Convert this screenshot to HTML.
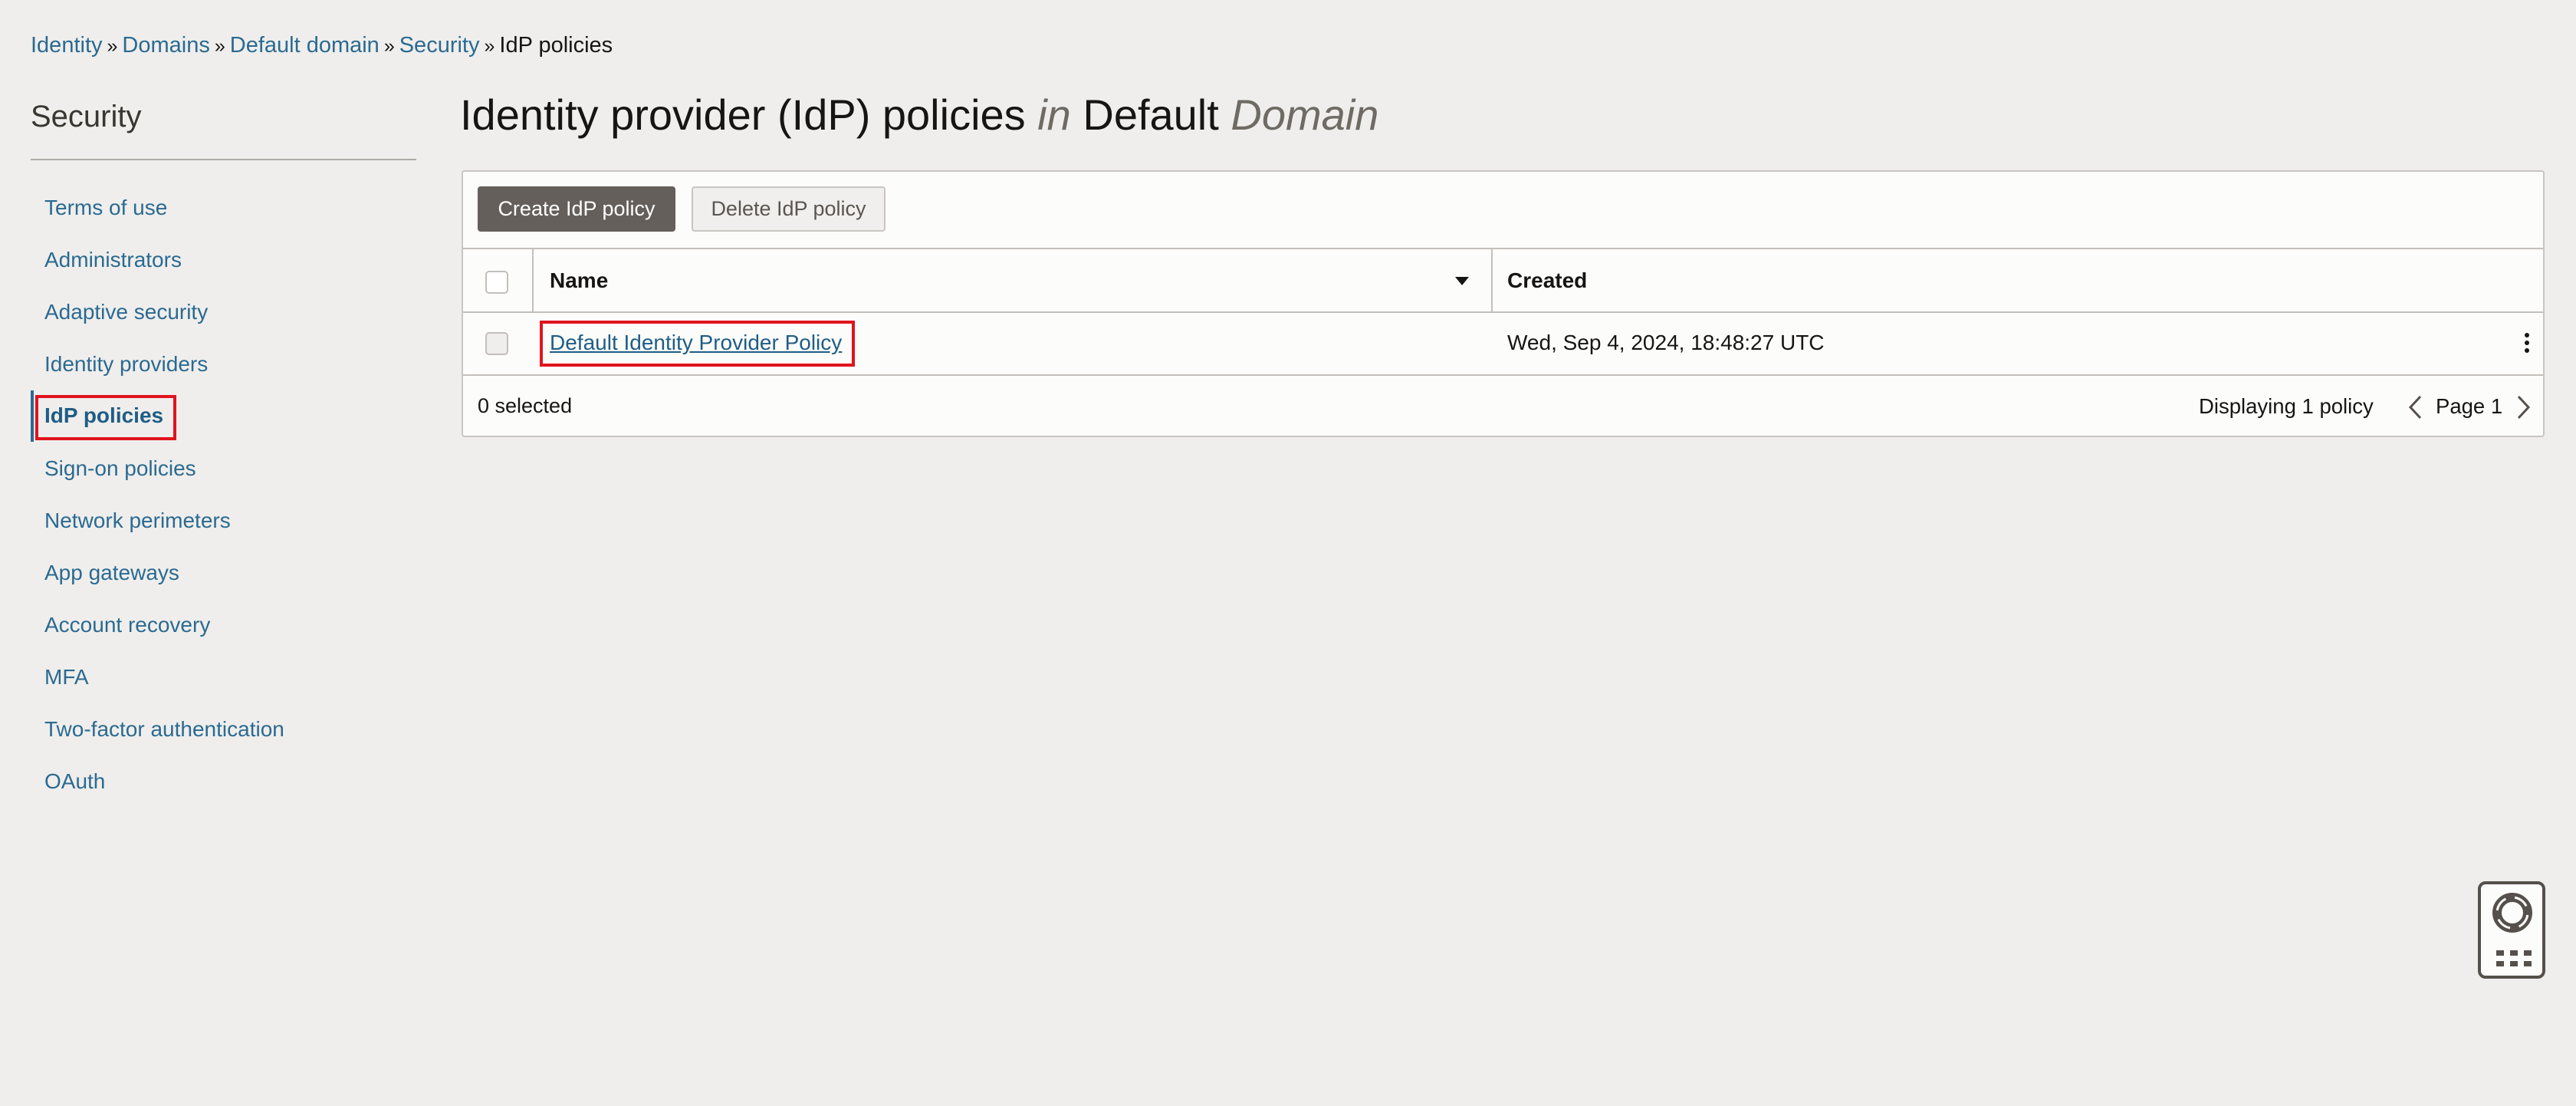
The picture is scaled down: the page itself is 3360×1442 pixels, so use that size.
<!DOCTYPE html>
<html><head><meta charset="utf-8">
<style>
*{box-sizing:border-box;margin:0;padding:0}
html,body{width:3360px;height:1442px;overflow:hidden}
body{background:#efeeec;font-family:"Liberation Sans",sans-serif;color:#161513;position:relative}
.a{position:absolute;white-space:nowrap}
.bc{top:43px;left:40px;font-size:29px;color:#2b6a91}
.bc span.s{color:#161513;font-size:25px;margin:0 6px}
.bc .cur{color:#161513}
.nav{left:58px;font-size:28px;color:#2b6a91}
.panel{left:602px;top:222px;width:2717px;height:348px;background:#fcfcfb;border:2px solid #c9c5c0;border-radius:4px}
.hl{position:absolute;left:0;right:0;height:2px;background:#c3bfba}
.cb{position:absolute;width:30px;height:30px;border:2px solid #c3bfba;border-radius:5px;background:#fff}
</style></head><body>
<div class="a bc">Identity<span class="s">»</span>Domains<span class="s">»</span>Default domain<span class="s">»</span>Security<span class="s">»</span><span class="cur">IdP policies</span></div>
<div class="a" style="left:40px;top:130px;font-size:40px;color:#3a3631;font-weight:300">Security</div>
<div class="a" style="left:40px;top:207px;width:503px;height:2px;background:#b0aca7"></div>
<div class="a nav" style="top:255px">Terms of use</div>
<div class="a nav" style="top:323px">Administrators</div>
<div class="a nav" style="top:391px">Adaptive security</div>
<div class="a nav" style="top:459px">Identity providers</div>
<div class="a" style="left:40px;top:509px;width:4px;height:67px;background:#2b6a91"></div>
<div class="a" style="left:46px;top:515px;width:184px;height:59px;border:4px solid #e0141e"></div>
<div class="a nav" style="top:526px;font-weight:bold;color:#1f5d85">IdP policies</div>
<div class="a nav" style="top:595px">Sign-on policies</div>
<div class="a nav" style="top:663px">Network perimeters</div>
<div class="a nav" style="top:731px">App gateways</div>
<div class="a nav" style="top:799px">Account recovery</div>
<div class="a nav" style="top:867px">MFA</div>
<div class="a nav" style="top:935px">Two-factor authentication</div>
<div class="a nav" style="top:1003px">OAuth</div>

<div class="a" style="left:600px;top:117px;font-size:56px;color:#161513">Identity provider (IdP) policies <i style="color:#6f6a64">in</i> Default <i style="color:#6f6a64">Domain</i></div>

<div class="a panel">
  <div style="position:absolute;left:19px;top:19px;width:258px;height:59px;background:#645f5a;border-radius:4px;color:#fff;font-size:27px;line-height:59px;text-align:center">Create IdP policy</div>
  <div style="position:absolute;left:298px;top:19px;width:253px;height:59px;background:#f1efed;border:2px solid #c9c5c0;border-radius:4px;color:#5a5550;font-size:27px;line-height:55px;text-align:center">Delete IdP policy</div>
  <div class="hl" style="top:99px"></div>
  <div class="hl" style="top:182px"></div>
  <div class="hl" style="top:264px"></div>
  <div style="position:absolute;left:90px;top:101px;width:2px;height:81px;background:#c3bfba"></div>
  <div style="position:absolute;left:1341px;top:101px;width:2px;height:81px;background:#c3bfba"></div>
  <div class="cb" style="left:29px;top:129px"></div>
  <div class="cb" style="left:29px;top:209px;background:#efeeec"></div>
  <div class="a" style="left:113px;top:126px;font-size:28px;font-weight:bold">Name</div>
  <div class="a" style="left:1294px;top:137px;width:0;height:0;border-left:9px solid transparent;border-right:9px solid transparent;border-top:11px solid #161513"></div>
  <div class="a" style="left:1362px;top:126px;font-size:28px;font-weight:bold">Created</div>
  <div class="a" style="left:100px;top:194px;width:411px;height:60px;border:4px solid #e0141e"></div>
  <div class="a" style="left:113px;top:207px;font-size:28px;color:#1f5d85;text-decoration:underline">Default Identity Provider Policy</div>
  <div class="a" style="left:1362px;top:207px;font-size:28px">Wed, Sep 4, 2024, 18:48:27 UTC</div>
  <div class="a" style="left:2689px;top:210px;width:6px;height:6px;border-radius:3px;background:#161513;box-shadow:0 10px 0 #161513,0 20px 0 #161513"></div>
  <div class="a" style="left:19px;top:290px;font-size:27px">0 selected</div>
  <div class="a" style="left:2264px;top:290px;font-size:27.5px">Displaying 1 policy</div>
  <svg class="a" style="left:2536px;top:291px" width="20" height="32" viewBox="0 0 20 32"><path d="M17 2 L4 16 L17 30" fill="none" stroke="#55504b" stroke-width="3"/></svg>
  <div class="a" style="left:2573px;top:290px;font-size:27.5px">Page 1</div>
  <svg class="a" style="left:2678px;top:291px" width="20" height="32" viewBox="0 0 20 32"><path d="M3 2 L16 16 L3 30" fill="none" stroke="#55504b" stroke-width="3"/></svg>
</div>

<div class="a" style="left:3232px;top:1149px;width:88px;height:127px;border:4px solid #55504b;border-radius:10px;background:#fcfcfb">
  <svg style="position:absolute;left:12px;top:8px" width="58" height="58" viewBox="0 0 58 58">
    <circle cx="29" cy="29" r="20" fill="none" stroke="#55504b" stroke-width="12"/>
    <circle cx="29" cy="29" r="20" fill="none" stroke="#fcfcfb" stroke-width="3" stroke-dasharray="19.4 12" stroke-dashoffset="-3"/>
  </svg>
  <div style="position:absolute;left:20px;top:86px;width:10px;height:7px;background:#55504b;box-shadow:18px 0 0 #55504b,36px 0 0 #55504b,0 14px 0 #55504b,18px 14px 0 #55504b,36px 14px 0 #55504b"></div>
</div>
</body></html>
